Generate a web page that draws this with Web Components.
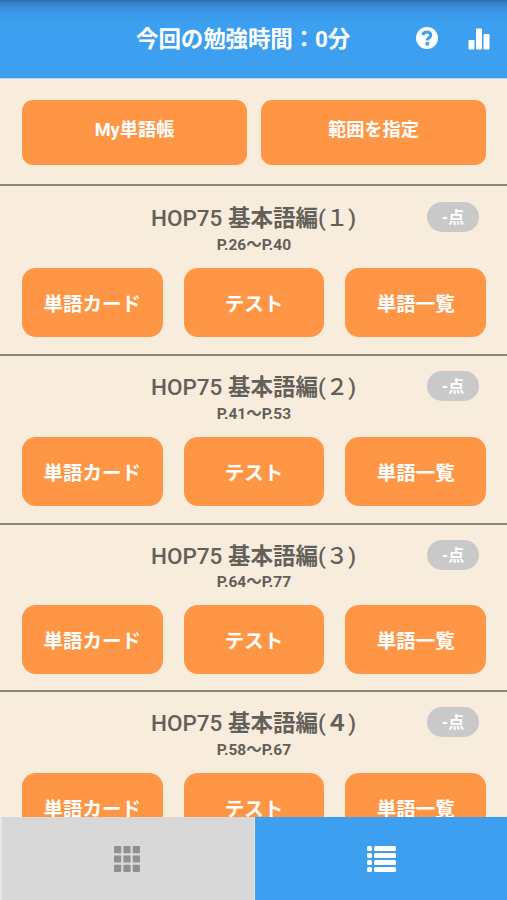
<!DOCTYPE html>
<html lang="ja">
<head>
<meta charset="utf-8">
<title>単語帳</title>
<style>
html,body{margin:0;height:100%;overflow:hidden}
body{background:#f8ecdd;font-family:Roboto,"Noto Sans CJK JP",sans-serif}
</style>
</head>
<body>
<study-app></study-app>
<script>
const define = (name, html) => customElements.define(name, class extends HTMLElement {
  constructor() {
    super();
    this.attachShadow({mode: 'open'}).innerHTML = html;
  }
});

define('app-header', `<style>
:host{display:grid;grid-template-columns:1fr;height:79px;box-sizing:border-box;flex:none;position:relative;
background:linear-gradient(#2c6da8 0,#3482c7 3px,#3a93e0 9px,#3c9ff0 20px);border-bottom:1px solid #b5d4ef;color:#fff}
h1{margin:0;padding:1px 0 0 136px;font-size:22.5px;letter-spacing:-.12px;line-height:76px;font-weight:700;white-space:nowrap}
nav{position:absolute;right:17px;top:26px;display:flex;gap:29px;align-items:center}
svg{display:block}
</style><h1><slot></slot></h1>
<nav>
<svg width="24" height="24" viewBox="0 0 24 24"><circle cx="12" cy="12" r="11" fill="#fff"/><path d="M8 9.2C8.300 4.800 15.800 5 15.800 9.200C15.800 11.900 12.300 11.600 12.300 14.500" fill="none" stroke="#3c9ff0" stroke-width="3"/><rect x="10.500" y="16" width="3.600" height="3.400" fill="#3c9ff0"/></svg>
<svg width="22" height="24" viewBox="0 0 22 24" fill="#fff"><rect x="0.500" y="14" width="6" height="9.500" rx="1"/><rect x="8" y="2.500" width="6" height="21" rx="1"/><rect x="15.500" y="8" width="6" height="15.500" rx="1"/></svg>
</nav>`);

define('app-button', `<style>
:host{display:flex;align-items:center;justify-content:center;box-sizing:border-box;background:#ff9646;border-radius:14px;
color:#fff;font-weight:700;font-size:19.5px;line-height:24px;white-space:nowrap;height:69px;padding-top:4px}
:host([wide]){height:65px;font-size:18.2px;border-radius:11px;padding:0 0 5px}
</style><span><slot></slot></span>`);

define('score-badge', `<style>
:host{display:flex;align-items:center;justify-content:center;box-sizing:border-box;width:52px;height:30px;border-radius:15px;
background:#c9c9c9;color:#fff;font-size:16px;font-weight:700;line-height:20px;padding-top:2px}
</style><slot></slot>`);

define('word-section', `<style>
:host{display:block;box-sizing:border-box;position:relative;border-top:2px solid #8f867c;height:var(--h,169px);
padding:var(--p,16px) 21px 0 22px;flex:none;color:#645f58}
h2{margin:0 0 0 129px;font-size:22.5px;line-height:32px;font-weight:500;white-space:nowrap;height:32px}
p{margin:0;text-align:center;font-size:15.500px;line-height:21px;font-weight:700;height:21px;padding-top:var(--g,1px)}
.row{display:grid;grid-template-columns:repeat(3,1fr);gap:21px;margin-top:12px}
score-badge{position:absolute;left:427px;top:var(--b,16px)}
</style><h2><slot name="title"></slot></h2><p><slot name="pages"></slot></p>
<score-badge>-点</score-badge>
<div class="row"><app-button>単語カード</app-button><app-button>テスト</app-button><app-button>単語一覧</app-button></div>`);

define('tab-bar', `<style>
:host{display:flex;height:83px;flex:none;background:#e8e8e8;box-sizing:border-box}
div{display:flex;align-items:center;justify-content:center}
.grid{width:252px;margin:0 1px 0 2px;background:#d8d8d8}
.grid svg{margin-right:2px}
.list{flex:1;background:#3c9ff0}
svg{display:block}
</style>
<div class="grid"><svg width="26" height="26" viewBox="0 0 26 26" fill="#909090">
${[0,9.4,18.8].map(y=>[0,9.4,18.8].map(x=>`<rect x="${x}" y="${y}" width="7.200" height="7.200" rx="1"/>`).join('')).join('')}</svg></div>
<div class="list"><svg width="29" height="26" viewBox="0 0 29 26" fill="#fff">
${[0,7,14,21].map(y=>`<rect y="${y}" width="5" height="5" rx="1.500"/><rect x="7" y="${y}" width="22" height="5" rx="1.500"/>`).join('')}</svg></div>`);

define('study-app', `<style>
:host{display:flex;flex-direction:column;height:900px;width:507px;background:#f8ecdd}
main{height:738px;overflow:hidden;display:flex;flex-direction:column}
.top{display:grid;grid-template-columns:1fr 1fr;gap:14px;padding:21px 21px 0 22px;height:105px;box-sizing:border-box;flex:none}
b{font-weight:700}
</style>
<app-header>今回の勉強時間：0分</app-header>
<main>
<div class="top"><app-button wide>My単語帳</app-button><app-button wide>範囲を指定</app-button></div>
<word-section style="--h:170px"><span slot="title">HOP75 <b>基本語編</b>(１)</span><span slot="pages">P.26～P.40</span></word-section>
<word-section style="--h:169px;--p:15px;--b:15px"><span slot="title">HOP75 <b>基本語編</b>(２)</span><span slot="pages">P.41～P.53</span></word-section>
<word-section style="--h:167px;--p:15px;--b:15px;--g:0px"><span slot="title">HOP75 <b>基本語編</b>(３)</span><span slot="pages">P.64～P.77</span></word-section>
<word-section style="--p:15px;--b:15px"><span slot="title">HOP75 <b>基本語編</b>(<b>４</b>)</span><span slot="pages">P.58～P.67</span></word-section>
</main>
<tab-bar></tab-bar>`);
</script>
</body>
</html>
